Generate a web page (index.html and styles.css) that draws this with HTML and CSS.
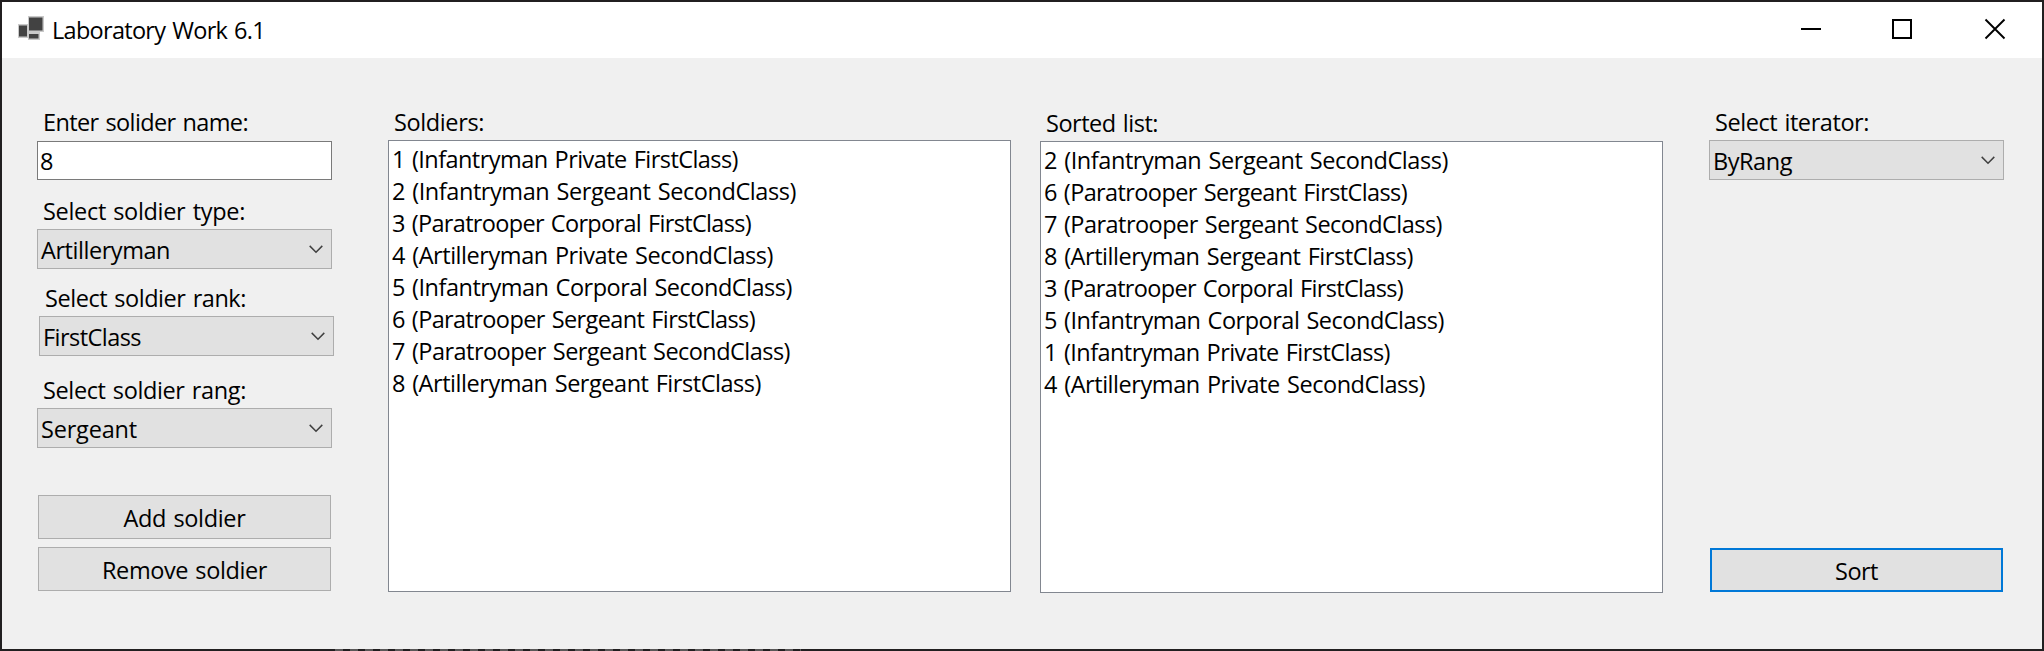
FILE: index.html
```
<!DOCTYPE html>
<html lang="en">
<head>
<meta charset="utf-8">
<title>Laboratory Work 6.1</title>
<link rel="stylesheet" href="styles.css">
</head>
<body>
<div class="window">
  <header class="titlebar">
    <svg class="app-icon" width="28" height="26" viewBox="0 0 28 26"><g fill="#c9c9c9"><rect x="1" y="8" width="10" height="14"/><rect x="11" y="0" width="16" height="16"/><rect x="11" y="15.500" width="12" height="8.500"/></g><g fill="#424242"><rect x="2" y="9.500" width="8" height="11"/><rect x="12" y="1.500" width="13.500" height="13"/><rect x="12" y="18" width="9.500" height="4.500"/></g></svg>
    <span class="title" data-w="213">Laboratory Work 6.1</span>
    <svg class="controls" width="205" height="22" viewBox="0 0 205 22" fill="none" stroke="#000" stroke-width="2"><path d="M0 11H20M92 2H110V20H92Z"/><path d="M184.500 1.500L203.500 20.500M203.500 1.500L184.500 20.500" stroke-width="1.900"/></svg>
  </header>
  <main class="content">
    <section class="form">
      <label class="label" data-w="205">Enter solider name:</label>
      <div class="textbox"><span data-w="13">8</span></div>
      <label class="label type" data-w="202">Select soldier type:</label>
      <div class="combo"><span data-w="129">Artilleryman</span><svg class="chevron" width="14" height="9" viewBox="0 0 14 9"><path d="M.7 .9L7 7.200L13.300 .9"/></svg></div>
      <div class="shifted">
        <label class="label rank" data-w="201">Select soldier rank:</label>
        <div class="combo"><span data-w="98">FirstClass</span><svg class="chevron" width="14" height="9" viewBox="0 0 14 9"><path d="M.7 .9L7 7.200L13.300 .9"/></svg></div>
      </div>
      <label class="label rang" data-w="203">Select soldier rang:</label>
      <div class="combo"><span data-w="96">Sergeant</span><svg class="chevron" width="14" height="9" viewBox="0 0 14 9"><path d="M.7 .9L7 7.200L13.300 .9"/></svg></div>
      <div class="buttons">
        <div class="button"><span data-w="122">Add soldier</span></div>
        <div class="button"><span data-w="165">Remove soldier</span></div>
      </div>
    </section>
    <section class="list-panel">
      <label class="label" data-w="90">Soldiers:</label>
      <ul class="listbox">
        <li><span data-w="346">1 (Infantryman Private FirstClass)</span></li>
        <li><span data-w="404">2 (Infantryman Sergeant SecondClass)</span></li>
        <li><span data-w="359">3 (Paratrooper Corporal FirstClass)</span></li>
        <li><span data-w="381">4 (Artilleryman Private SecondClass)</span></li>
        <li><span data-w="400">5 (Infantryman Corporal SecondClass)</span></li>
        <li><span data-w="363">6 (Paratrooper Sergeant FirstClass)</span></li>
        <li><span data-w="398">7 (Paratrooper Sergeant SecondClass)</span></li>
        <li><span data-w="369">8 (Artilleryman Sergeant FirstClass)</span></li>
      </ul>
    </section>
    <section class="list-panel sorted">
      <label class="label" data-w="112">Sorted list:</label>
      <ul class="listbox">
        <li><span data-w="404">2 (Infantryman Sergeant SecondClass)</span></li>
        <li><span data-w="363">6 (Paratrooper Sergeant FirstClass)</span></li>
        <li><span data-w="398">7 (Paratrooper Sergeant SecondClass)</span></li>
        <li><span data-w="369">8 (Artilleryman Sergeant FirstClass)</span></li>
        <li><span data-w="359">3 (Paratrooper Corporal FirstClass)</span></li>
        <li><span data-w="400">5 (Infantryman Corporal SecondClass)</span></li>
        <li><span data-w="346">1 (Infantryman Private FirstClass)</span></li>
        <li><span data-w="381">4 (Artilleryman Private SecondClass)</span></li>
      </ul>
    </section>
    <section class="iterator">
      <div>
        <label class="label" data-w="154">Select iterator:</label>
        <div class="combo"><span data-w="79">ByRang</span><svg class="chevron" width="14" height="9" viewBox="0 0 14 9"><path d="M.7 .9L7 7.200L13.300 .9"/></svg></div>
      </div>
      <div class="button focused"><span data-w="43">Sort</span></div>
    </section>
  </main>
  <div class="backdrop-edge"></div>
</div>
<script src="fit.js"></script>
</body>
</html>
```
FILE: fit.js
```
// Tracks each text run to its nominal width.
document.querySelectorAll('[data-w]').forEach(function (el) {
  var range = document.createRange();
  range.selectNodeContents(el);
  var width = range.getBoundingClientRect().width;
  var gaps = el.textContent.length;
  el.style.letterSpacing = ((Number(el.dataset.w) - width) / gaps).toFixed(3) + 'px';
});
```
FILE: styles.css
```
* { box-sizing: border-box; }
body {
  margin: 0;
  width: 2044px;
  height: 651px;
  overflow: hidden;
  background: #211f20;
  color: #000;
  font: 23.5px/32px "Segoe UI", "Open Sans", "Noto Sans", sans-serif;
  word-spacing: 1.5px;
  white-space: nowrap;
}
.window {
  position: relative;
  height: 651px;
  border: 2px solid #211f20;
  background: #f0f0f0;
}
.titlebar {
  display: flex;
  height: 56px;
  padding: 0 36px 0 15px;
  background: #fff;
}
.app-icon { margin-top: 14px; }
.title { margin: 12px 0 0 7px; }
.controls { margin: 16px 0 0 auto; }
.content {
  display: flex;
  align-items: flex-start;
  padding: 48px 38px 0 35px;
}
.label {
  display: block;
  height: 34px;
  padding-left: 6px;
}
.form { width: 295px; margin-right: 56px; }
.textbox, .combo {
  height: 40px;
  border: 1px solid #adadad;
  background: #e1e1e1;
}
.textbox {
  height: 39px;
  margin-top: 1px;
  padding: 3px 2px;
  border-color: #7a7a7a;
  background: #fff;
}
.combo {
  display: flex;
  justify-content: space-between;
  padding: 4px 8px 0 3px;
}
.chevron {
  margin-top: 11px;
  fill: none;
  stroke: #404040;
  stroke-width: 1.5;
}
.type { margin-top: 15px; }
.shifted { width: 295px; margin-left: 2px; }
.rank { margin-top: 13px; }
.rang { margin-top: 18px; }
.buttons {
  display: grid;
  gap: 8px;
  margin: 47px 1px 0;
}
.button {
  height: 44px;
  padding-top: 6px;
  border: 1px solid #adadad;
  background: #e1e1e1;
  text-align: center;
}
.focused {
  margin: 0 1px;
  padding-top: 5px;
  border: 2px solid #0078d7;
}
.list-panel { width: 623px; }
.sorted { margin: 1px 46px 0 29px; }
.listbox {
  height: 452px;
  margin: 0;
  padding: 2px 3px;
  border: 1px solid #828790;
  background: #fff;
  list-style: none;
}
.iterator {
  display: flex;
  flex-direction: column;
  justify-content: space-between;
  width: 295px;
  height: 486px;
}
/* Sliver of the dark editor lying behind the window. */
.backdrop-edge {
  position: absolute;
  left: 333px;
  bottom: -2px;
  width: 466px;
  height: 2px;
  background: repeating-linear-gradient(90deg, #5a5858 0 8px, #211f20 8px 15px);
}
```
